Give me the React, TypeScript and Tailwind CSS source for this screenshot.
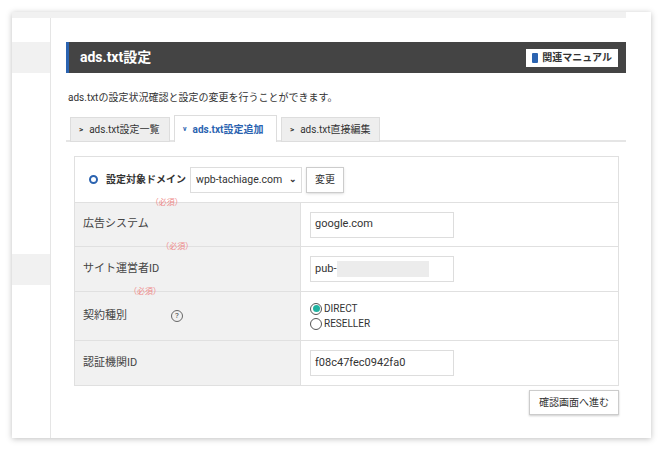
export default function App() {
  const req = <span className="text-[8px] text-[#e88] self-start mt-[-6px] ml-0.5">（必須）</span>;
  return (
    <div className="w-[664px] h-[451px] bg-white relative overflow-hidden text-[#333]" style={{ fontFamily: '"Roboto","Noto Sans CJK JP",sans-serif' }}>
      <div className="absolute left-[12px] top-[12px] w-[639px] h-[426px] bg-white shadow-[0_1px_6px_rgba(0,0,0,0.25)] flex flex-col">
        <div className="h-[6px] bg-[#f1f1f1] w-[614px]" />
        <div className="flex flex-1">
          <div className="w-[39px] border-r border-[#e5e5e5] flex flex-col">
            <div className="h-[24px]" />
            <div className="h-[31px] bg-[#f1f1f1]" />
            <div className="h-[181px]" />
            <div className="h-[31px] bg-[#f1f1f1]" />
          </div>
          <div className="w-[560px] ml-[15px] pt-[24px]">
            <div className="h-[31px] bg-[#444] border-l-[3px] border-[#2b63b0] flex items-center justify-between pl-[11px] pr-[8px]">
              <span className="text-white font-bold text-[14px]">ads.txt設定</span>
              <div className="bg-white h-[18px] px-[6px] flex items-center gap-1 text-[10px] font-bold">
                <span className="w-[6px] h-[10px] bg-[#2b63b0] rounded-[1px]" />関連マニュアル
              </div>
            </div>
            <div className="text-[10px] mt-[17px] ml-[2px]">ads.txtの設定状況確認と設定の変更を行うことができます。</div>
            <div className="flex items-end gap-[4px] mt-[10px] pl-[4px] border-b-[2px] border-[#e5e5e5] h-[27px] whitespace-nowrap">
              <div className="w-[100px] h-[25px] bg-[#eee] border border-[#ddd] flex items-center px-[8px] text-[10px] mb-[-2px]"><span className="text-[8px] mr-[6px] font-bold">&gt;</span>ads.txt設定一覧</div>
              <div className="w-[103px] h-[27px] bg-white border border-[#ddd] border-b-0 flex items-center px-[8px] text-[10px] text-[#2b63b0] font-bold mb-[-2px]"><span className="text-[7px] mr-[6px]">v</span>ads.txt設定追加</div>
              <div className="w-[99px] h-[25px] bg-[#eee] border border-[#ddd] flex items-center px-[8px] text-[10px] mb-[-2px]"><span className="text-[8px] mr-[6px] font-bold">&gt;</span>ads.txt直接編集</div>
            </div>
            <div className="ml-[8px] mt-[14px] w-[545px] border border-[#e0e0e0] text-[11px]">
              <div className="h-[45px] flex items-center pl-[14px] gap-[4px] whitespace-nowrap">
                <span className="w-[9px] h-[9px] rounded-full border-[2px] border-[#2b63b0]" />
                <span className="font-bold text-[10px] ml-[4px]">設定対象ドメイン</span>
                <div className="h-[26px] w-[112px] border border-[#ddd] flex items-center justify-between pl-[5px] pr-[4px] text-[10.5px]">wpb-tachiage.com<span className="text-[9px] font-bold">⌄</span></div>
                <div className="h-[26px] px-[8px] border border-[#ccc] shadow-sm flex items-center text-[10px]">変更</div>
              </div>
              {[
                ["広告システム", true, null, 44],
                ["サイト運営者ID", true, null, 45],
                ["契約種別", true, "radio", 49],
                ["認証機関ID", false, null, 45],
              ].map(([label, r, kind, h], i) => (
                <div key={i} className="flex border-t border-[#e0e0e0]" style={{ height: h as number }}>
                  <div className="w-[226px] bg-[#f1f1f1] border-r border-[#e0e0e0] flex items-center pl-[8px] text-[11px] text-[#444]">
                    {label as string}{r && req}{kind === "radio" && <span className="ml-[10px] w-[12px] h-[12px] rounded-full border border-[#666] text-[8px] flex items-center justify-center">?</span>}
                  </div>
                  <div className="flex-1 flex items-center pl-[9px]">
                    {kind === "radio" ? (
                      <div className="flex flex-col text-[10px] leading-[15px]">
                        <div className="flex items-center gap-[2px]"><span className="w-[12px] h-[12px] rounded-full border border-[#555] flex items-center justify-center"><span className="w-[7px] h-[7px] rounded-full bg-[#20b2a0]" /></span>DIRECT</div>
                        <div className="flex items-center gap-[2px]"><span className="w-[12px] h-[12px] rounded-full border border-[#555]" />RESELLER</div>
                      </div>
                    ) : (
                      <div className="w-[144px] h-[26px] border border-[#ddd] flex items-center px-[4px] text-[11px]">
                        {i === 0 && "google.com"}
                        {i === 1 && (<>pub-<span className="ml-[1px] w-[92px] h-[16px] bg-[#ececec]" /></>)}
                        {i === 3 && "f08c47fec0942fa0"}
                      </div>
                    )}
                  </div>
                </div>
              ))}
            </div>
            <div className="flex justify-end mt-[4px] w-[553px]">
              <div className="w-[90px] h-[25px] border border-[#ccc] shadow-[0_1px_2px_rgba(0,0,0,0.2)] flex items-center justify-center text-[10px]">確認画面へ進む</div>
            </div>
          </div>
        </div>
      </div>
    </div>
  );
}
